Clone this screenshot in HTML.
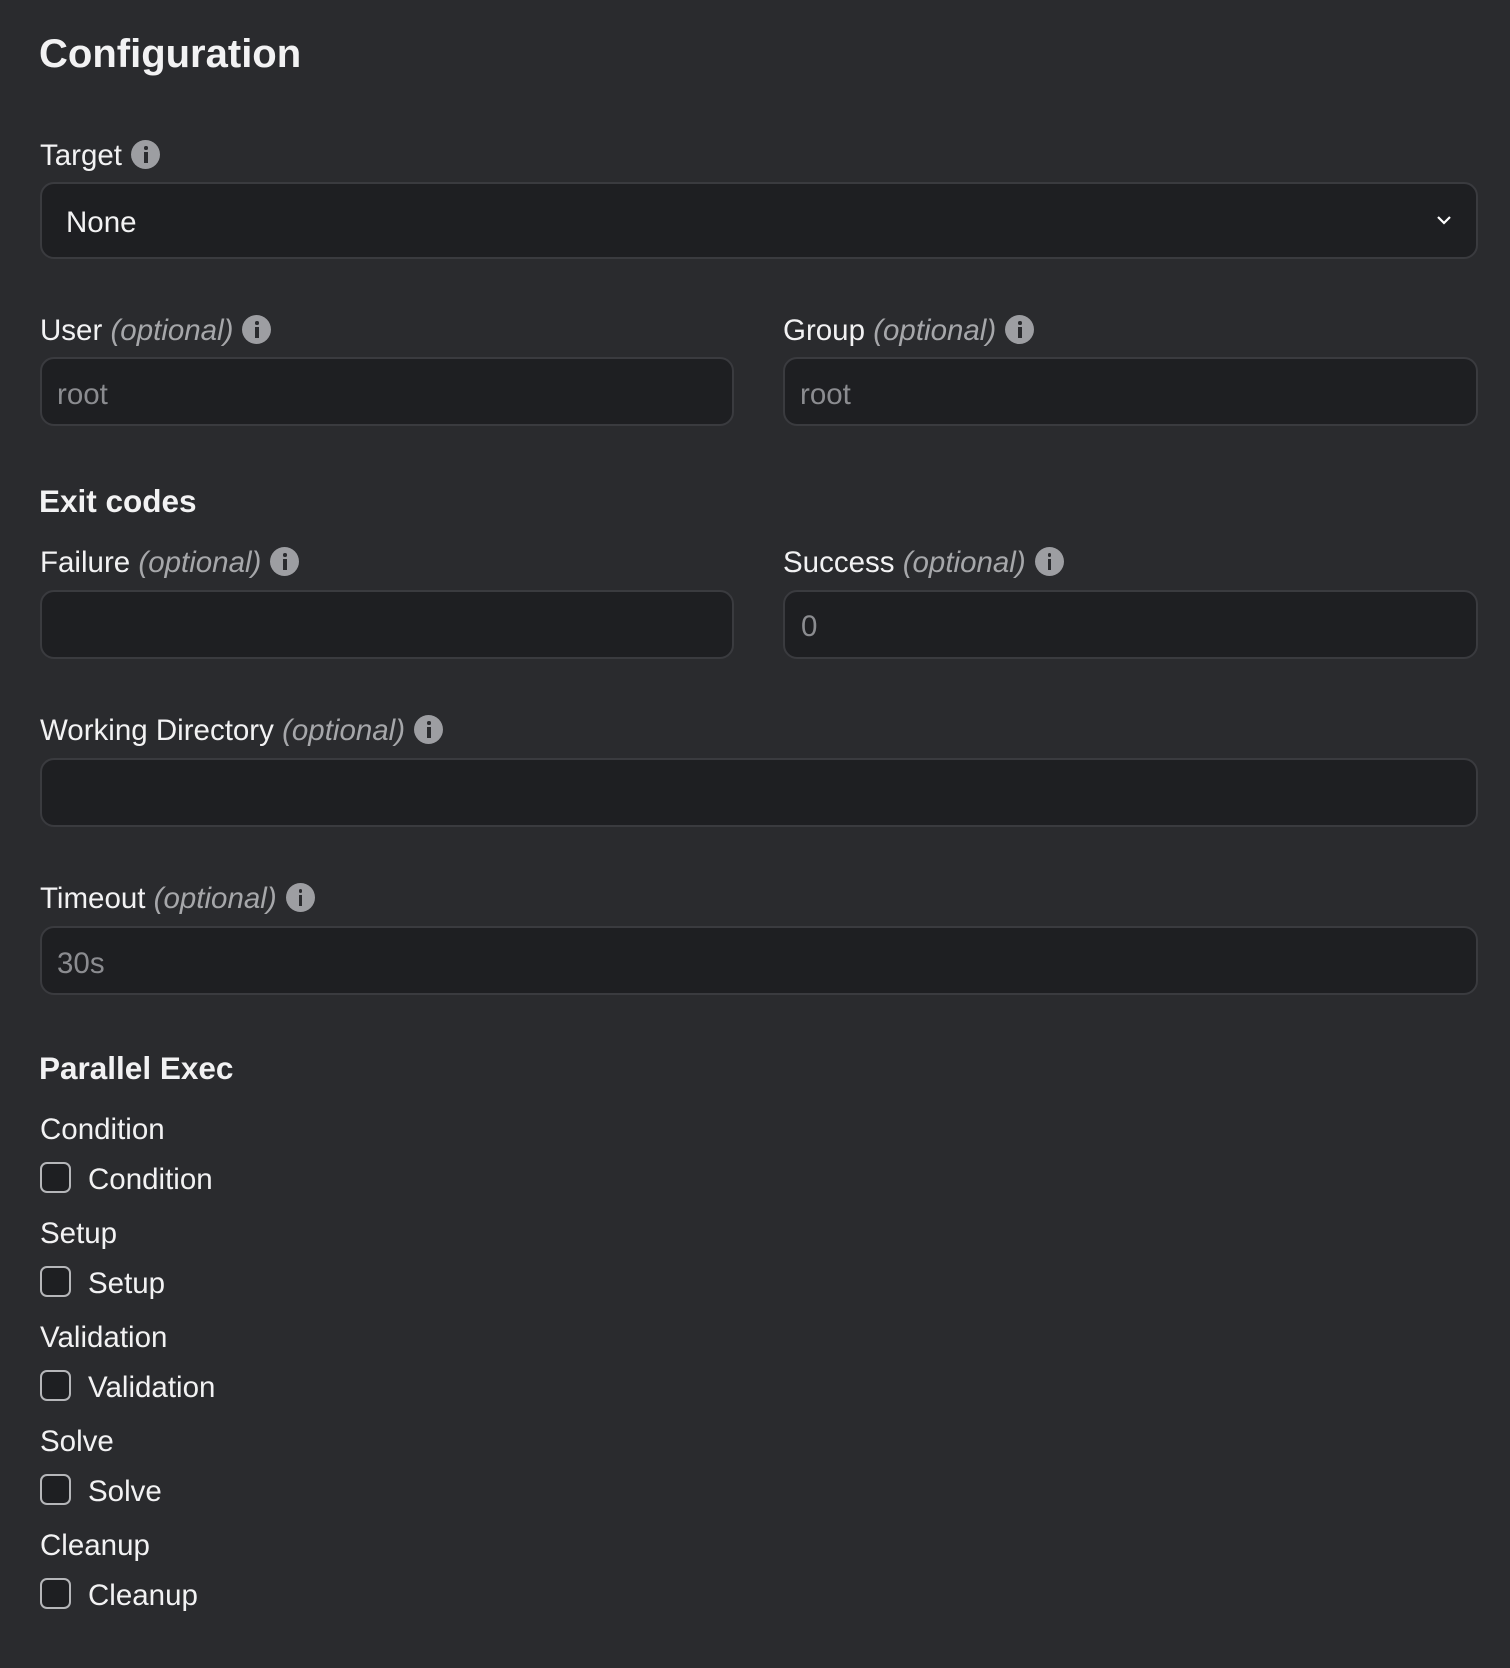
<!DOCTYPE html>
<html><head><meta charset="utf-8"><style>
html,body{margin:0;padding:0}
body{width:1510px;height:1668px;background:#2a2b2e;position:relative;overflow:hidden;font-family:"Liberation Sans",sans-serif;color:#f2f2f3}
.t{position:absolute;line-height:1;white-space:nowrap}
.h1{font-size:40px;font-weight:bold}
.h2{font-size:31.5px;font-weight:bold}
.lb{font-size:29.5px}
.lb i{color:#a6a7aa}
.ic{display:inline-block;width:29px;height:29px;border-radius:50%;background:#9d9ea2;vertical-align:-4px;margin-left:9px;position:relative}
.ic::before{content:"";position:absolute;left:13px;top:6px;width:3.5px;height:3.5px;background:#2a2b2e;border-radius:50%}
.ic::after{content:"";position:absolute;left:13px;top:12px;width:3.5px;height:11px;background:#2a2b2e}
.in{position:absolute;background:#1e1f22;border:2px solid #3a3b3f;border-radius:14px;box-sizing:border-box}
.ph{color:#8b8c90;font-size:29.5px}
.cb{position:absolute;left:40px;width:31px;height:31px;box-sizing:border-box;border:2px solid #b5b6b9;border-radius:7px;background:#1e1f22}
</style></head><body>
<div class="t h1" style="left:39px;top:34px">Configuration</div>

<div class="t lb" style="left:40px;top:140px">Target<span class="ic"></span></div>
<div class="in" style="left:40px;top:182px;width:1438px;height:77px"></div>
<div class="t" style="left:66px;top:208px;font-size:29.5px">None</div>
<svg style="position:absolute;left:1436px;top:214px" width="16" height="12" viewBox="0 0 16 12"><path d="M2 3 L8 9 L14 3" fill="none" stroke="#fff" stroke-width="2.2"/></svg>

<div class="t lb" style="left:40px;top:315px">User <i>(optional)</i><span class="ic"></span></div>
<div class="in" style="left:40px;top:357px;width:694px;height:69px"></div>
<div class="t ph" style="left:57px;top:380px">root</div>
<div class="t lb" style="left:783px;top:315px">Group <i>(optional)</i><span class="ic"></span></div>
<div class="in" style="left:783px;top:357px;width:695px;height:69px"></div>
<div class="t ph" style="left:800px;top:380px">root</div>

<div class="t h2" style="left:39px;top:486px">Exit codes</div>
<div class="t lb" style="left:40px;top:547px">Failure <i>(optional)</i><span class="ic"></span></div>
<div class="in" style="left:40px;top:590px;width:694px;height:69px"></div>
<div class="t lb" style="left:783px;top:547px">Success <i>(optional)</i><span class="ic"></span></div>
<div class="in" style="left:783px;top:590px;width:695px;height:69px"></div>
<div class="t ph" style="left:801px;top:612px">0</div>

<div class="t lb" style="left:40px;top:715px">Working Directory <i>(optional)</i><span class="ic"></span></div>
<div class="in" style="left:40px;top:758px;width:1438px;height:69px"></div>

<div class="t lb" style="left:40px;top:883px">Timeout <i>(optional)</i><span class="ic"></span></div>
<div class="in" style="left:40px;top:926px;width:1438px;height:69px"></div>
<div class="t ph" style="left:57px;top:949px">30s</div>

<div class="t h2" style="left:39px;top:1053px">Parallel Exec</div>

<div class="t lb" style="left:40px;top:1115px">Condition</div>
<div class="cb" style="top:1162px"></div>
<div class="t lb" style="left:88px;top:1165px">Condition</div>

<div class="t lb" style="left:40px;top:1219px">Setup</div>
<div class="cb" style="top:1266px"></div>
<div class="t lb" style="left:88px;top:1269px">Setup</div>

<div class="t lb" style="left:40px;top:1323px">Validation</div>
<div class="cb" style="top:1370px"></div>
<div class="t lb" style="left:88px;top:1373px">Validation</div>

<div class="t lb" style="left:40px;top:1427px">Solve</div>
<div class="cb" style="top:1474px"></div>
<div class="t lb" style="left:88px;top:1477px">Solve</div>

<div class="t lb" style="left:40px;top:1531px">Cleanup</div>
<div class="cb" style="top:1578px"></div>
<div class="t lb" style="left:88px;top:1581px">Cleanup</div>
</body></html>
